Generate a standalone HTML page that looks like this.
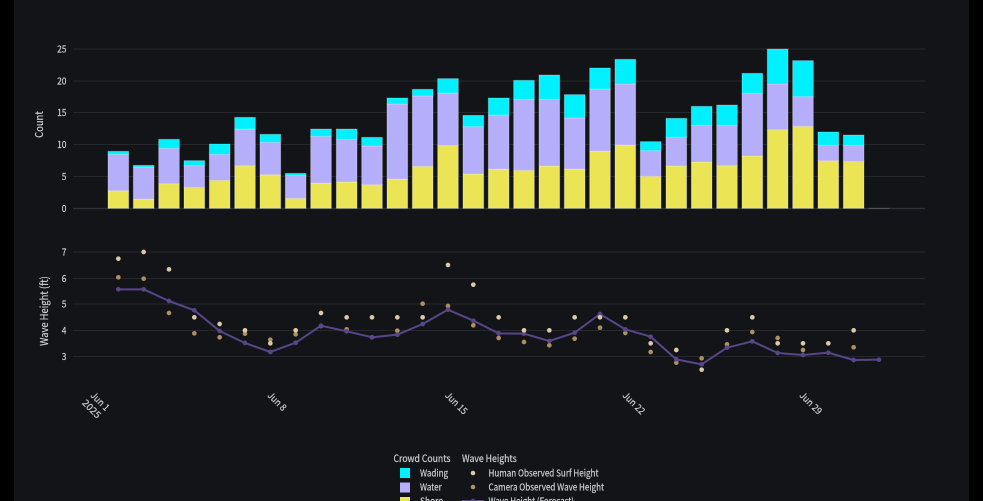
<!DOCTYPE html>
<html><head><meta charset="utf-8"><style>
html,body{margin:0;padding:0;background:#000;width:983px;height:501px;overflow:hidden}
svg{display:block}
text{font-family:"Noto Sans CJK JP","Liberation Sans",sans-serif;font-size:9.5px;fill:#cfd1d5;stroke:#cfd1d5;stroke-width:.18px}
</style></head><body>
<svg width="983" height="501" viewBox="0 0 983 501" xmlns="http://www.w3.org/2000/svg">
<rect width="983" height="501" fill="#000"/>
<rect x="14" width="955" height="501" fill="#131418"/>
<g stroke="#25272d" stroke-width="1">
<path d="M73 49H925M73 81H925M73 112.5H925M73 144.5H925M73 176.5H925"/>
<path d="M73 252H925M73 278.5H925M73 304H925M73 330.5H925M73 356.5H925"/>
</g>
<path d="M73 208.5H925" stroke="#30323a" stroke-width="1.2"/>
<g transform="translate(0,30) scale(.33333)" stroke="#fff" stroke-opacity=".3" stroke-width="2.6">
<path fill="#ebe556" d="M324 482h62V535h-62zM400 507h62V535h-62zM476 461h62V535h-62zM552 472h62V535h-62zM628 451h62V535h-62zM704 407h62V535h-62zM780 434h62V535h-62zM856 505h62V535h-62zM932 459h62V535h-62zM1009 456h62V535h-62zM1085 464h62V535h-62zM1161 447h62V535h-62zM1237 409h62V535h-62zM1313 346h62V535h-62zM1389 432h62V535h-62zM1465 417h62V535h-62zM1541 421h62V535h-62zM1617 408h62V535h-62zM1693 417h62V535h-62zM1769 363h62V535h-62zM1845 345h62V535h-62zM1921 439h62V535h-62zM1998 408h62V535h-62zM2074 396h62V535h-62zM2150 407h62V535h-62zM2226 378h62V535h-62zM2302 299h62V535h-62zM2378 289h62V535h-62zM2454 392h62V535h-62zM2530 394h62V535h-62z"/>
<path fill="#b5aefa" d="M324 373h62V482h-62zM400 411h62V507h-62zM476 355h62V461h-62zM552 407h62V472h-62zM628 373h62V451h-62zM704 297h62V407h-62zM780 337h62V434h-62zM856 436h62V505h-62zM932 319h62V459h-62zM1009 328h62V456h-62zM1085 348h62V464h-62zM1161 222h62V447h-62zM1237 198h62V409h-62zM1313 189h62V346h-62zM1389 290h62V432h-62zM1465 255h62V417h-62zM1541 208h62V421h-62zM1617 208h62V408h-62zM1693 264h62V417h-62zM1769 177h62V363h-62zM1845 162h62V345h-62zM1921 362h62V439h-62zM1998 322h62V408h-62zM2074 286h62V396h-62zM2150 286h62V407h-62zM2226 190h62V378h-62zM2302 162h62V299h-62zM2378 200h62V289h-62zM2454 346h62V392h-62zM2530 346h62V394h-62z"/>
<path fill="#00f0ff" d="M324 364h62V373h-62zM400 406h62V411h-62zM476 328h62V355h-62zM552 392h62V407h-62zM628 342h62V373h-62zM704 262h62V297h-62zM780 313h62V337h-62zM856 430h62V436h-62zM932 297h62V319h-62zM1009 297h62V328h-62zM1085 322h62V348h-62zM1161 204h62V222h-62zM1237 178h62V198h-62zM1313 146h62V189h-62zM1389 256h62V290h-62zM1465 204h62V255h-62zM1541 151h62V208h-62zM1617 135h62V208h-62zM1693 194h62V264h-62zM1769 114h62V177h-62zM1845 88h62V162h-62zM1921 335h62V362h-62zM1998 265h62V322h-62zM2074 229h62V286h-62zM2150 225h62V286h-62zM2226 130h62V190h-62zM2302 57h62V162h-62zM2378 92h62V200h-62zM2454 306h62V346h-62zM2530 315h62V346h-62z"/>
<path d="M2606 535h62" stroke="#55575f" stroke-opacity="1" stroke-width="3"/>
</g>
<g transform="translate(0,235) scale(.33333)" fill="none" stroke-linecap="round" stroke-linejoin="round">
<path stroke="#b08e62" stroke-width="14" d="M355 127h0M431 131h0M507 234h0M583 295h0M659 307h0M735 296h0M811 314h0M887 298h0M963 273h0M1040 283h0M1116 307h0M1192 287h0M1268 206h0M1344 213h0M1420 271h0M1496 309h0M1572 321h0M1648 331h0M1724 311h0M1800 278h0M1876 294h0M1952 351h0M2029 383h0M2105 370h0M2181 328h0M2257 291h0M2333 309h0M2409 345h0M2561 337h0"/>
<path stroke="#574689" stroke-width="6" d="M355 163L431 163L507 198L583 226L659 288L735 324L811 351L887 323L963 272L1040 289L1116 307L1192 299L1268 267L1344 224L1420 257L1496 295L1572 296L1648 318L1724 293L1800 237L1876 283L1952 305L2029 373L2105 388L2181 338L2257 319L2333 354L2409 360L2485 353L2561 375L2637 374"/>
<path stroke="#574689" stroke-width="14" d="M355 163h0M431 163h0M507 198h0M583 226h0M659 288h0M735 324h0M811 351h0M887 323h0M963 272h0M1040 289h0M1116 307h0M1192 299h0M1268 267h0M1344 224h0M1420 257h0M1496 295h0M1572 296h0M1648 318h0M1724 293h0M1800 237h0M1876 283h0M1952 305h0M2029 373h0M2105 388h0M2181 338h0M2257 319h0M2333 354h0M2409 360h0M2485 353h0M2561 375h0M2637 374h0"/>
<path stroke="#dcc9a5" stroke-width="14" d="M355 71h0M431 51h0M507 103h0M583 247h0M659 267h0M735 286h0M811 325h0M887 286h0M963 234h0M1040 247h0M1116 247h0M1192 247h0M1268 247h0M1344 90h0M1420 149h0M1496 247h0M1572 286h0M1648 286h0M1724 247h0M1800 247h0M1876 247h0M1952 325h0M2029 345h0M2105 404h0M2181 286h0M2257 247h0M2333 325h0M2409 325h0M2485 325h0M2561 286h0"/>
</g>
<g text-anchor="end">
<text x="66.5" y="52.5" textLength="9.4" lengthAdjust="spacingAndGlyphs">25</text>
<text x="66.5" y="84.5" textLength="9.4" lengthAdjust="spacingAndGlyphs">20</text>
<text x="66.5" y="116" textLength="9.4" lengthAdjust="spacingAndGlyphs">15</text>
<text x="66.5" y="148" textLength="9.4" lengthAdjust="spacingAndGlyphs">10</text>
<text x="66.5" y="180" textLength="4.7" lengthAdjust="spacingAndGlyphs">5</text>
<text x="66.5" y="212" textLength="4.7" lengthAdjust="spacingAndGlyphs">0</text>
<text x="66.5" y="255.5" textLength="4.7" lengthAdjust="spacingAndGlyphs">7</text>
<text x="66.5" y="282" textLength="4.7" lengthAdjust="spacingAndGlyphs">6</text>
<text x="66.5" y="307.5" textLength="4.7" lengthAdjust="spacingAndGlyphs">5</text>
<text x="66.5" y="334" textLength="4.7" lengthAdjust="spacingAndGlyphs">4</text>
<text x="66.5" y="360" textLength="4.7" lengthAdjust="spacingAndGlyphs">3</text>
</g>
<text transform="translate(43,124.5) rotate(-90)" text-anchor="middle" style="font-size:10.5px" textLength="26.7" lengthAdjust="spacingAndGlyphs">Count</text>
<text transform="translate(48,311) rotate(-90)" text-anchor="middle" style="font-size:10.5px" textLength="69.7" lengthAdjust="spacingAndGlyphs">Wave Height (ft)</text>
<text transform="translate(90,396) rotate(45)" textLength="22" lengthAdjust="spacingAndGlyphs">Jun 1</text>
<text transform="translate(81.5,403.5) rotate(45)" textLength="22" lengthAdjust="spacingAndGlyphs">2025</text>
<text transform="translate(267,396) rotate(45)" textLength="22" lengthAdjust="spacingAndGlyphs">Jun 8</text>
<text transform="translate(444.5,396) rotate(45)" textLength="27" lengthAdjust="spacingAndGlyphs">Jun 15</text>
<text transform="translate(622,396) rotate(45)" textLength="27" lengthAdjust="spacingAndGlyphs">Jun 22</text>
<text transform="translate(799,396) rotate(45)" textLength="27" lengthAdjust="spacingAndGlyphs">Jun 29</text>
<text x="393.5" y="462" style="font-size:10px" textLength="57" lengthAdjust="spacingAndGlyphs">Crowd Counts</text>
<text x="462" y="462" style="font-size:10px" textLength="54.7" lengthAdjust="spacingAndGlyphs">Wave Heights</text>
<rect x="400" y="468" width="10" height="10" fill="#00f0ff"/>
<rect x="400" y="482.5" width="10" height="10" fill="#b5aefa"/>
<rect x="400" y="497" width="10" height="10" fill="#ebe556"/>
<text x="420" y="476.5" textLength="28" lengthAdjust="spacingAndGlyphs">Wading</text>
<text x="420" y="490.5" textLength="21.7" lengthAdjust="spacingAndGlyphs">Water</text>
<text x="420" y="504.5" textLength="23" lengthAdjust="spacingAndGlyphs">Shore</text>
<circle cx="473" cy="473" r="2.3" fill="#dcc9a5"/>
<circle cx="473" cy="487" r="2.3" fill="#b08e62"/>
<path d="M462 501H484" stroke="#574689" stroke-width="2"/>
<circle cx="473" cy="501" r="2.3" fill="#574689"/>
<text x="488.5" y="476.5" textLength="110" lengthAdjust="spacingAndGlyphs">Human Observed Surf Height</text>
<text x="488.5" y="490.5" textLength="115.5" lengthAdjust="spacingAndGlyphs">Camera Observed Wave Height</text>
<text x="488.5" y="504.5" textLength="85.5" lengthAdjust="spacingAndGlyphs">Wave Height (Forecast)</text>
</svg>
</body></html>
